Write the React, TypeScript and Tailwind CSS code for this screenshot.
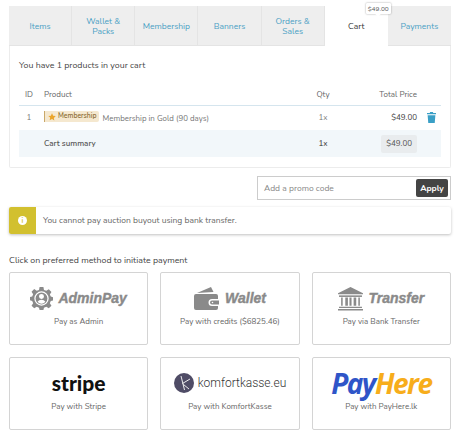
const tabs = ['Items', 'Wallet & Packs', 'Membership', 'Banners', 'Orders & Sales', 'Cart', 'Payments'];

function AdminIcon() {
  return (
    <svg viewBox="0 0 24 24" className="w-[23px] h-[23px]" fill="#8a8a8a">
      <path
        fillRule="evenodd"
        d="M10 0h4l.6 3 2.400 1 2.600-1.700 2.800 2.800-1.700 2.600 1 2.300 2.300.6v3.400l-2.300.6-1 2.300 1.700 2.600-2.800 2.800-2.600-1.700-2.400 1-.6 2.400h-4l-.6-2.400-2.400-1-2.600 1.700-2.800-2.800 1.700-2.600-1-2.300L0 13.800v-3.400l2.300-.6 1-2.300-1.700-2.600 2.800-2.800L7 4l2.400-1zM12 4.500a7.500 7.500 0 1 0 0 15 7.500 7.500 0 0 0 0-15z"
      />
      <path
        fillRule="evenodd"
        d="M12 5.800a6.200 6.200 0 1 0 0 12.400 6.200 6.200 0 0 0 0-12.400zm0 1.400a2.600 2.600 0 1 1 0 5.200 2.600 2.600 0 0 1 0-5.200zm-4 8.300c.8-1.500 2.300-2.200 4-2.200s3.200.7 4 2.200a5 5 0 0 1-8 0z"
      />
    </svg>
  );
}

function WalletIcon() {
  return (
    <svg viewBox="0 0 26 24" className="w-[26px] h-[24px]" fill="#8a8a8a">
      <path d="M3 7L17 1l2.500 5z" />
      <path
        fillRule="evenodd"
        d="M2 8h20a2 2 0 0 1 2 2v3h-6a3.500 3.500 0 0 0 0 7h6v2a2 2 0 0 1-2 2H2a2 2 0 0 1-2-2V10a2 2 0 0 1 2-2z"
      />
      <path fillRule="evenodd" d="M18 14.500h7v4h-7a2 2 0 0 1 0-4zm.5 1.200a.8.800 0 1 0 0 1.600.8.800 0 0 0 0-1.600z" />
    </svg>
  );
}

function BankIcon() {
  return (
    <svg viewBox="0 0 24 24" className="w-[25px] h-[25px]" fill="#8a8a8a">
      <path d="M12 1L24 7v1H0V7z" />
      <path d="M1 9h22v1.500H1z" />
      <path d="M3 11h1.500v8H3zM7 11h2.500v8H7zM11 11h2v8h-2zM15 11h2.500v8H15zM19.500 11H21v8h-1.500z" />
      <path d="M1 20h22v1.200H1zM0 22h24v1.500H0z" />
    </svg>
  );
}

function KomfortIcon() {
  return (
    <svg viewBox="0 0 20 20" className="w-[20px] h-[20px]">
      <circle cx="10" cy="10" r="10" fill="#4f4c66" />
      <path d="M7 3l3.500 14M8.500 10.500L16 6M9.500 11.500L15 16" stroke="#fff" strokeWidth="0.9" fill="none" />
    </svg>
  );
}

function PayCard({ logo, label }: { logo: React.ReactNode; label: string }) {
  return (
    <div className="h-[73px] border border-[#d4d4d4] rounded-[2px] bg-white flex flex-col items-center pt-[12px]">
      <div className="h-[26px] flex items-center justify-center">{logo}</div>
      <div className="mt-[5px] text-[8px] leading-[12px] text-[#666]">{label}</div>
    </div>
  );
}

function GrayLogo({ icon, name }: { icon: React.ReactNode; name: string }) {
  return (
    <div className="flex items-center gap-[5px]">
      {icon}
      <span className="font-['Liberation_Sans',sans-serif] text-[14px] font-bold italic text-[#8a8a8a] [-webkit-text-stroke:0.4px_#8a8a8a]">
        {name}
      </span>
    </div>
  );
}

export default function App() {
  return (
    <div className="w-[460px] h-[436px] overflow-hidden bg-white px-[9px] pt-[6px] font-['Nunito','Noto_Sans',sans-serif] text-[#444]">
      <div className="grid grid-cols-7 h-[40px] bg-[#eeeeee] border-b border-[#e4e4e4]">
        {tabs.map((tab) => (
          <div
            key={tab}
            className={
              tab === 'Cart'
                ? 'relative -mb-[1px] bg-white flex items-center justify-center text-center text-[8.500px] leading-[10px] text-[#333]'
                : 'border-r border-[#e4e4e4] last:border-r-0 flex items-center justify-center text-center text-[8.500px] leading-[10px] px-[10px] text-[#4a9fc4]'
            }
          >
            {tab}
            {tab === 'Cart' && (
              <div className="absolute left-[41px] -top-[3px] px-[2px] h-[11px] leading-[11px] bg-white rounded-[1px] shadow-[0_0_2px_rgba(0,0,0,0.4)] text-[6.500px] text-[#555]">
                $49.00
                <span className="absolute left-[10px] -bottom-[2px] w-[4px] h-[4px] rotate-45 bg-white" />
              </div>
            )}
          </div>
        ))}
      </div>

      <div className="h-[122px] border border-t-0 border-[#ececec] rounded-b-[2px] px-[9px] pt-[13px]">
        <p className="text-[8.800px] leading-[12px] text-[#444]">You have 1 products in your cart</p>
        <table className="w-full mt-[14px] text-[8px] border-collapse">
          <thead>
            <tr className="h-[20px] border-b border-[#d5e5ee] text-[#666]">
              <th className="w-[20px] font-normal text-center">ID</th>
              <th className="font-normal text-left pl-[5px]">Product</th>
              <th className="w-[40px] font-normal text-center">Qty</th>
              <th className="w-[78px] font-normal text-right pr-[4px]">Total Price</th>
              <th className="w-[20px]"></th>
            </tr>
          </thead>
          <tbody>
            <tr className="h-[25px] text-[#777]">
              <td className="text-center">1</td>
              <td className="pl-[5px]">
                <span className="inline-flex items-center h-[11px] bg-[#f5e8cf] border-l border-[#c9a86a] pl-[3px] pr-[3px] rounded-r-[2px] text-[6.800px] font-semibold text-[#8c6d33]">
                  <svg viewBox="0 0 24 24" className="w-[8px] h-[8px] mr-[2px]" fill="#eaa52c">
                    <path d="M12 1l3.400 7.300 7.900 1-5.800 5.500 1.500 7.900L12 18l-7 3.700 1.500-7.900L.7 9.300l7.900-1z" />
                  </svg>
                  Membership
                </span>{' '}
                <span className="ml-[1px] text-[7.900px]">Membership in Gold (90 days)</span>
              </td>
              <td className="text-center">1x</td>
              <td className="text-right pr-[4px] text-[#444]">$49.00</td>
              <td>
                <svg viewBox="0 0 10 12" className="w-[9px] h-[11px] mx-auto" fill="#3a9fc6">
                  <path d="M3.500 0h3l.5 1h3v1.500H0V1h3zM.7 3.500h8.600L8.600 12H1.400z" />
                </svg>
              </td>
            </tr>
            <tr className="h-[27px] bg-[#f2f7fa] text-[#555]">
              <td></td>
              <td className="pl-[5px] font-semibold">Cart summary</td>
              <td className="text-center font-semibold">1x</td>
              <td className="text-right pr-[4px]">
                <span className="inline-block px-[5px] h-[18px] leading-[18px] bg-[#e9ecee] rounded-[2px]">$49.00</span>
              </td>
              <td></td>
            </tr>
          </tbody>
        </table>
      </div>

      <div className="flex justify-end mt-[8px]">
        <div className="w-[194px] h-[24px] border border-[#cccccc] flex items-center justify-between pl-[6px] pr-[2px]">
          <span className="text-[8.500px] text-[#888]">Add a promo code</span>
          <span className="w-[32px] h-[18px] leading-[18px] bg-[#444] rounded-[2px] text-center text-white text-[8.500px] font-bold">
            Apply
          </span>
        </div>
      </div>

      <div className="flex h-[27px] mt-[7px] rounded-[2px] shadow-[0_1px_3px_rgba(0,0,0,0.25)]">
        <div className="w-[27px] bg-[#d2c02f] flex items-center justify-center rounded-l-[2px]">
          <span className="w-[9px] h-[9px] -mt-[1px] rounded-full bg-white text-[#d2c02f] text-[7px] leading-[9px] font-bold text-center">
            i
          </span>
        </div>
        <div className="flex-1 flex items-center pl-[7px] text-[8.500px] text-[#666]">
          You cannot pay auction buyout using bank transfer.
        </div>
      </div>

      <p className="mt-[20px] text-[8.800px] leading-[12px] text-[#444]">Click on preferred method to initiate payment</p>

      <div className="grid grid-cols-3 gap-[12px] mt-[6px]">
        <PayCard label="Pay as Admin" logo={<GrayLogo icon={<AdminIcon />} name="AdminPay" />} />
        <PayCard label="Pay with credits ($6825.46)" logo={<GrayLogo icon={<WalletIcon />} name="Wallet" />} />
        <PayCard label="Pay via Bank Transfer" logo={<GrayLogo icon={<BankIcon />} name="Transfer" />} />
        <PayCard
          label="Pay with Stripe"
          logo={<span className="font-['Lato',sans-serif] text-[21px] font-black text-[#111]">stripe</span>}
        />
        <PayCard
          label="Pay with KomfortKasse"
          logo={
            <div className="flex items-center gap-[4px]">
              <KomfortIcon />
              <span className="font-['Roboto',sans-serif] text-[12px] font-light text-[#333]">komfortkasse.eu</span>
            </div>
          }
        />
        <PayCard
          label="Pay with PayHere.lk"
          logo={
            <span className="font-['Open_Sans',sans-serif] text-[28px] font-bold italic tracking-[-1.500px]">
              <span className="text-[#2f55c8]">Pay</span>
              <span className="text-[#f7ad1b]">Here</span>
            </span>
          }
        />
      </div>
    </div>
  );
}
